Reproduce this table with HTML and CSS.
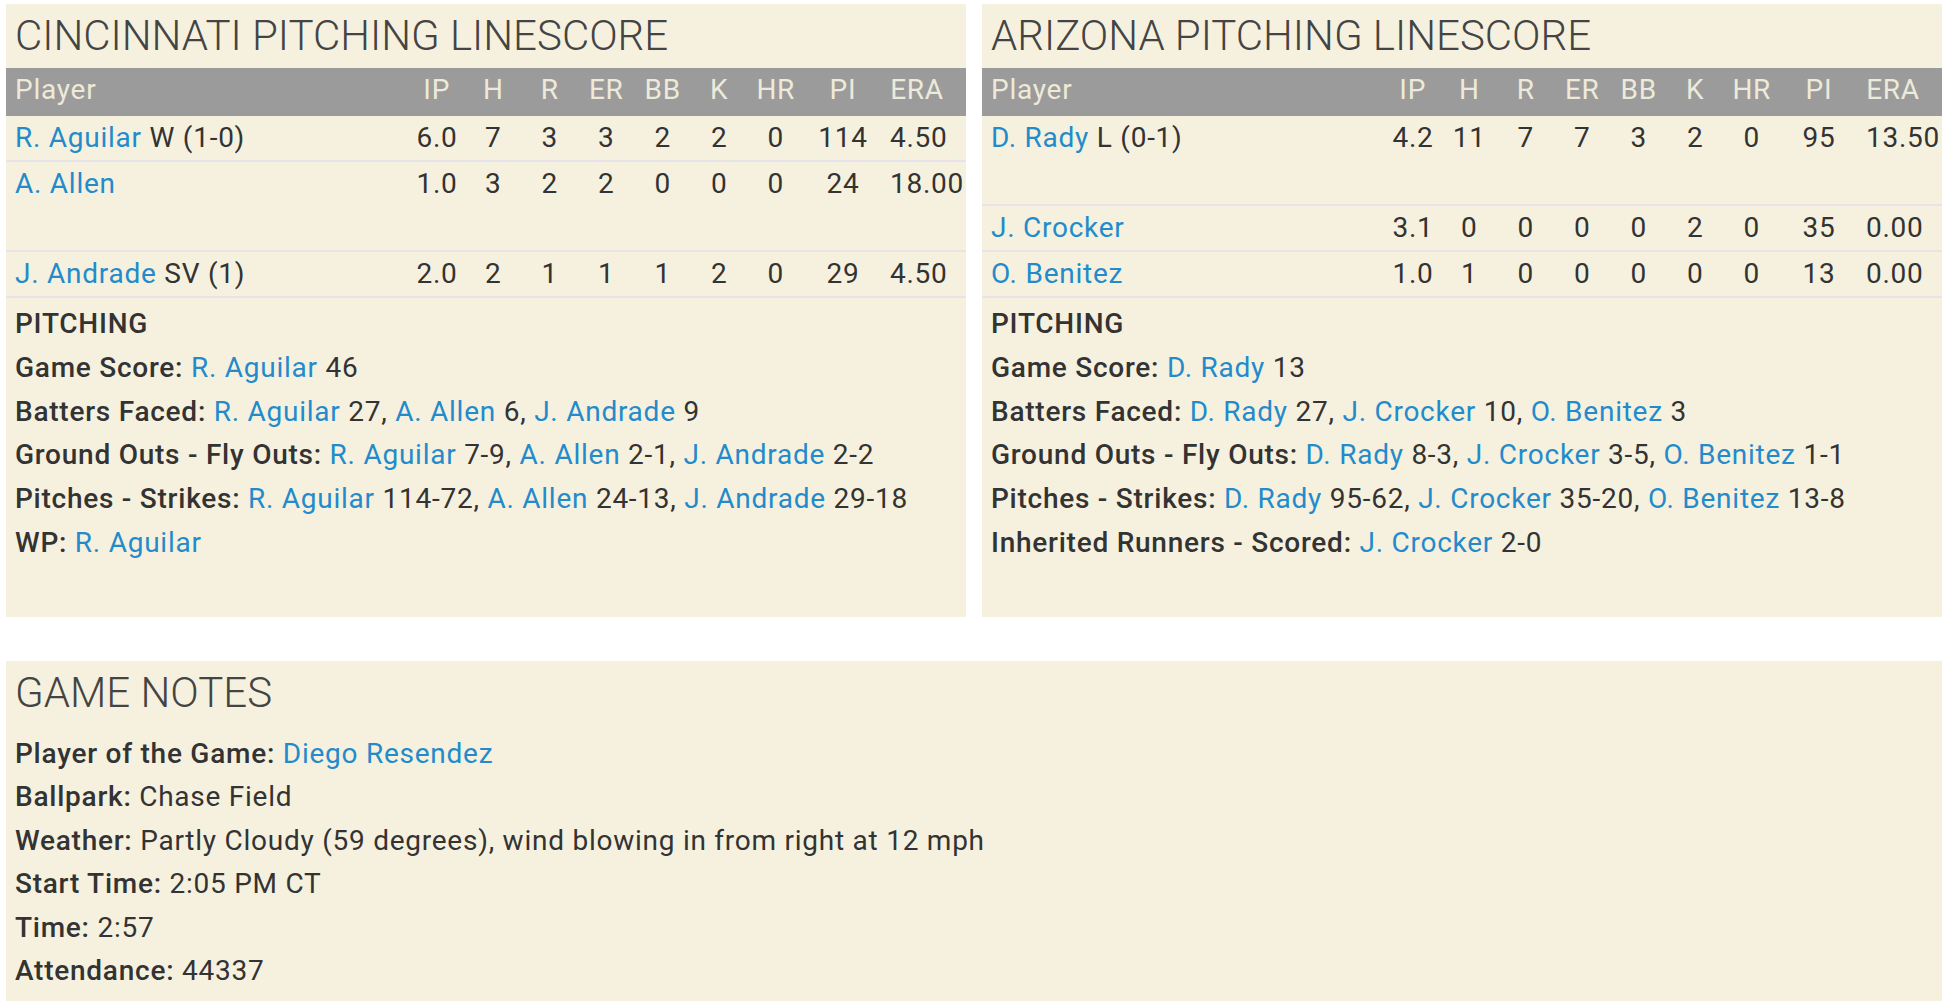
FILE: index.html
```html
<!DOCTYPE html>
<html lang="en">
<head>
<meta charset="utf-8">
<title>Pitching Linescore</title>
<link rel="stylesheet" href="styles.css">
</head>
<body>
<div class="top">
  <section class="panel">
    <h2 class="title">CINCINNATI PITCHING LINESCORE</h2>
    <div class="tbl">
      <div class="row head">
        <div class="c name">Player</div><div class="c">IP</div><div class="c">H</div><div class="c">R</div><div class="c">ER</div><div class="c">BB</div><div class="c">K</div><div class="c">HR</div><div class="c">PI</div><div class="c">ERA</div><div class="c"></div>
      </div>
      <div class="row">
        <div class="c name"><a>R. Aguilar</a> W (1-0)</div><div class="c">6.0</div><div class="c">7</div><div class="c">3</div><div class="c">3</div><div class="c">2</div><div class="c">2</div><div class="c">0</div><div class="c">114</div><div class="c">4.50</div><div class="c"></div>
      </div>
      <div class="row tall">
        <div class="c name"><a>A. Allen</a></div><div class="c">1.0</div><div class="c">3</div><div class="c">2</div><div class="c">2</div><div class="c">0</div><div class="c">0</div><div class="c">0</div><div class="c">24</div><div class="c">18.00</div><div class="c"></div>
      </div>
      <div class="row">
        <div class="c name"><a>J. Andrade</a> SV (1)</div><div class="c">2.0</div><div class="c">2</div><div class="c">1</div><div class="c">1</div><div class="c">1</div><div class="c">2</div><div class="c">0</div><div class="c">29</div><div class="c">4.50</div><div class="c"></div>
      </div>
    </div>
    <div class="notes-list pitching">
      <p class="sub">PITCHING</p>
      <p><b>Game Score:</b> <a>R. Aguilar</a> 46</p>
      <p><b>Batters Faced:</b> <a>R. Aguilar</a> 27, <a>A. Allen</a> 6, <a>J. Andrade</a> 9</p>
      <p><b>Ground Outs - Fly Outs:</b> <a>R. Aguilar</a> 7-9, <a>A. Allen</a> 2-1, <a>J. Andrade</a> 2-2</p>
      <p><b>Pitches - Strikes:</b> <a>R. Aguilar</a> 114-72, <a>A. Allen</a> 24-13, <a>J. Andrade</a> 29-18</p>
      <p><b>WP:</b> <a>R. Aguilar</a></p>
    </div>
  </section>
  <section class="panel">
    <h2 class="title">ARIZONA PITCHING LINESCORE</h2>
    <div class="tbl">
      <div class="row head">
        <div class="c name">Player</div><div class="c">IP</div><div class="c">H</div><div class="c">R</div><div class="c">ER</div><div class="c">BB</div><div class="c">K</div><div class="c">HR</div><div class="c">PI</div><div class="c">ERA</div><div class="c"></div>
      </div>
      <div class="row tall">
        <div class="c name"><a>D. Rady</a> L (0-1)</div><div class="c">4.2</div><div class="c">11</div><div class="c">7</div><div class="c">7</div><div class="c">3</div><div class="c">2</div><div class="c">0</div><div class="c">95</div><div class="c">13.50</div><div class="c"></div>
      </div>
      <div class="row">
        <div class="c name"><a>J. Crocker</a></div><div class="c">3.1</div><div class="c">0</div><div class="c">0</div><div class="c">0</div><div class="c">0</div><div class="c">2</div><div class="c">0</div><div class="c">35</div><div class="c">0.00</div><div class="c"></div>
      </div>
      <div class="row">
        <div class="c name"><a>O. Benitez</a></div><div class="c">1.0</div><div class="c">1</div><div class="c">0</div><div class="c">0</div><div class="c">0</div><div class="c">0</div><div class="c">0</div><div class="c">13</div><div class="c">0.00</div><div class="c"></div>
      </div>
    </div>
    <div class="notes-list pitching">
      <p class="sub">PITCHING</p>
      <p><b>Game Score:</b> <a>D. Rady</a> 13</p>
      <p><b>Batters Faced:</b> <a>D. Rady</a> 27, <a>J. Crocker</a> 10, <a>O. Benitez</a> 3</p>
      <p><b>Ground Outs - Fly Outs:</b> <a>D. Rady</a> 8-3, <a>J. Crocker</a> 3-5, <a>O. Benitez</a> 1-1</p>
      <p><b>Pitches - Strikes:</b> <a>D. Rady</a> 95-62, <a>J. Crocker</a> 35-20, <a>O. Benitez</a> 13-8</p>
      <p><b>Inherited Runners - Scored:</b> <a>J. Crocker</a> 2-0</p>
    </div>
  </section>
</div>
<section class="panel game-notes">
  <h2 class="title">GAME NOTES</h2>
  <div class="notes-list gn">
    <p><b>Player of the Game:</b> <a>Diego Resendez</a></p>
    <p><b>Ballpark:</b> Chase Field</p>
    <p><b>Weather:</b> Partly Cloudy (59 degrees), wind blowing in from right at 12 mph</p>
    <p><b>Start Time:</b> 2:05 PM CT</p>
    <p><b>Time:</b> 2:57</p>
    <p><b>Attendance:</b> 44337</p>
  </div>
</section>
</body>
</html>
```
FILE: styles.css
```css
html, body {
  background: #ffffff;
}
body {
  margin: 4px 4px 0 6px;
  font-family: Roboto, "Noto Sans", "Liberation Sans", sans-serif;
  font-size: 28px;
  letter-spacing: 0.75px;
  color: #333333;
}
.top {
  display: flex;
  gap: 16px;
}
.panel {
  flex: 1 1 0;
  background: #f6f1df;
}
.title {
  margin: 0;
  padding-left: 9px;
  font-size: 42px;
  font-weight: 300;
  letter-spacing: 0;
  line-height: 64px;
  color: #444444;
}
a {
  color: #238bcb;
  text-decoration: none;
}
.row {
  display: grid;
  grid-template-columns: 1fr repeat(7, 56.5px) 78px 70px 14px;
  height: 44px;
  line-height: 44px;
  border-bottom: 2px solid #e6e4ea;
}
.row.tall {
  height: 88px;
}
.row.head {
  background: #9b9b9b;
  color: #eeead9;
  height: 48px;
  border-bottom: 0;
}
.c {
  text-align: center;
  white-space: nowrap;
  padding: 0 8px;
}
.c.name {
  text-align: left;
  padding-left: 9px;
}
.notes-list p {
  margin: 0;
  line-height: 43.8px;
}
.notes-list b, .sub {
  font-weight: 500;
}
.pitching {
  padding: 4px 9px 52px;
}
.game-notes {
  margin-top: 44px;
}
.gn {
  padding: 7px 9px 8px;
}
.gn p {
  line-height: 43.5px;
}
```
